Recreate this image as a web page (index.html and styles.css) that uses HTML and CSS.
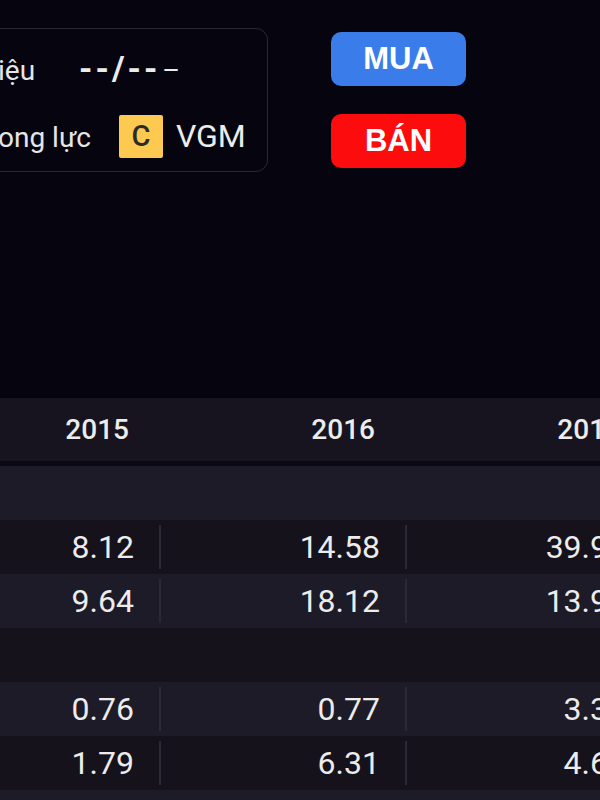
FILE: index.html
```html
<!DOCTYPE html>
<html>
  <head>
    <title>VGM - chỉ số</title>
    <link rel="stylesheet" href="styles.css">
  </head>
  <body>
    <div class="top">
      <div class="card">
        <div class="row">
          <span class="label">iệu</span>
          <span class="date">--/--</span>
          <span class="sub">–</span>
        </div>
        <div class="row">
          <span class="label">ong lực</span>
          <span class="grade">C</span>
          <span class="ticker">VGM</span>
        </div>
      </div>
      <div class="actions">
        <button class="btn buy">MUA</button>
        <button class="btn sell">BÁN</button>
      </div>
    </div>

    <div class="table">
      <div class="tr head">
        <div class="th">2015</div>
        <div class="th">2016</div>
        <div class="th">2017</div>
      </div>

      <div class="tr group"></div>
      <div class="tr">
        <div class="td">8.12</div>
        <div class="td">14.58</div>
        <div class="td">39.95</div>
      </div>
      <div class="tr">
        <div class="td">9.64</div>
        <div class="td">18.12</div>
        <div class="td">13.97</div>
      </div>

      <div class="tr group"></div>
      <div class="tr">
        <div class="td">0.76</div>
        <div class="td">0.77</div>
        <div class="td">3.38</div>
      </div>
      <div class="tr">
        <div class="td">1.79</div>
        <div class="td">6.31</div>
        <div class="td">4.62</div>
      </div>
      <div class="tr group"></div>
    </div>
  </body>
</html>
```

FILE: styles.css
```css
body {
    background-color: #06050f;
    color: #ececec;
    font-family: Roboto, "Noto Sans", sans-serif;
    margin: 0;
    overflow: hidden;
    width: 600px;
}
.top {
    box-sizing: border-box;
    display: flex;
    gap: 63px;
    height: 398px;
    padding-top: 28px;
}
.card {
    border: 1px solid #292834;
    border-radius: 12px;
    box-sizing: border-box;
    display: flex;
    flex-direction: column;
    gap: 18px;
    height: 144px;
    margin-left: -20px;
    padding: 14px 0 0 17px;
    width: 288px;
}
.row {
    align-items: baseline;
    display: flex;
    height: 50px;
    line-height: 50px;
    white-space: nowrap;
}
.label {
    color: #e6e6e6;
    font-size: 28px;
}
.date {
    font-size: 34px;
    font-weight: bold;
    letter-spacing: 3px;
    margin-left: 44px;
}
.sub {
    font-size: 27px;
    margin-left: 2px;
}
.grade {
    align-self: center;
    background-color: #fdc951;
    border-radius: 2px;
    color: #2b2b2b;
    font-size: 29px;
    font-weight: 500;
    height: 43px;
    line-height: 43px;
    margin-left: 28px;
    text-align: center;
    width: 44px;
}
.ticker {
    font-size: 32px;
    margin-left: 13px;
}
.actions {
    display: flex;
    flex-direction: column;
    gap: 28px;
    padding-top: 4px;
}
.btn {
    border: none;
    border-radius: 10px;
    color: #ffffff;
    font-family: "Liberation Sans", Arial, sans-serif;
    font-size: 31px;
    font-weight: bold;
    height: 54px;
    padding: 0;
    width: 135px;
}
.buy {
    background-color: #3b7ceb;
}
.sell {
    background-color: #fc0c0c;
}

.table {
    display: flex;
    flex-direction: column;
}
.tr {
    background-color: #1c1b27;
    display: grid;
    grid-template-columns: 159px 246px 246px;
    height: 54px;
}
.tr:nth-child(odd) {
    background-color: #15121c;
}
.tr.head {
    background-color: #17141f;
    border-bottom: 5px solid #0a0913;
    height: 63px;
}
.th {
    align-items: center;
    display: flex;
    font-size: 28px;
    font-weight: 500;
    justify-content: flex-end;
    padding-right: 30px;
}
.td {
    align-items: center;
    border-left: 2px solid #2a2935;
    display: flex;
    font-size: 32px;
    justify-content: flex-end;
    margin: 5px 0;
    padding-right: 25px;
}
.td:first-child {
    border-left: none;
}
```
